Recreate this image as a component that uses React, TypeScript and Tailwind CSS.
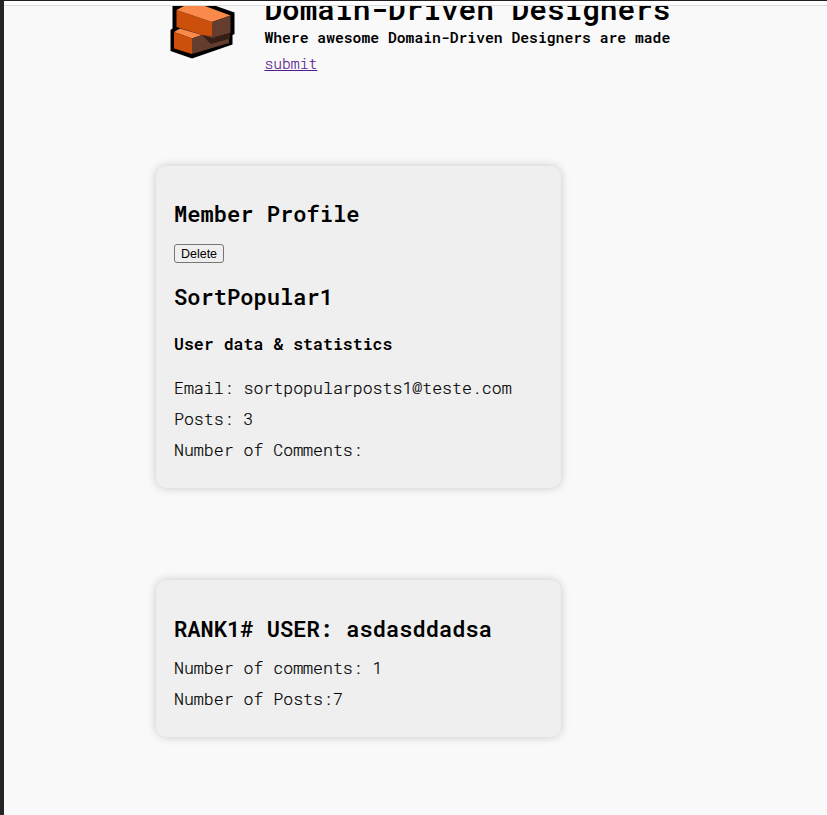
import type { ReactNode } from "react";

function Logo() {
  return (
    <svg className="ml-[166px] h-[54px] w-[66px] shrink-0" viewBox="0 0 66 54" aria-label="Bricks logo">
      <path d="M2.5 0H46L64.5 6.5V28L62.5 29V38.5L22 52.5L0.5 45V24L2.5 22.5Z" fill="#000" />
      <path d="M6.5 4L42 16V32L6.5 21Z" fill="#cc4f0b" />
      <path d="M6.5 4L14 0H35L60.5 9.5L42 16Z" fill="#fa8a4b" />
      <path d="M42 16L60.5 9.5V27L42 32Z" fill="#653d2e" />
      <path d="M4 26L10 22.5L32 29L22 32.5Z" fill="#fa8a4b" />
      <path d="M4 26L22 32.5V48L4 42.5Z" fill="#cc4f0b" />
      <path d="M22 32.5L32 29L59 32V37L22 48Z" fill="#653d2e" />
      <path d="M32 29L42 32L60 27V32.5L41 38Z" fill="#351f17" />
    </svg>
  );
}

function Card({ children, className }: { children: ReactNode; className: string }) {
  return (
    <section className={`ml-[152px] w-[405px] rounded-[10px] bg-[#efefef] pl-[18px] shadow-[0_0_10px_rgba(0,0,0,0.2)] ${className}`}>
      {children}
    </section>
  );
}

function Heading({ children }: { children: ReactNode }) {
  return <h2 className="text-[22.08px] leading-8 font-semibold whitespace-nowrap">{children}</h2>;
}

function Line({ children }: { children: ReactNode }) {
  return (
    <p className="text-[16.56px] leading-[31px] font-light whitespace-nowrap [-webkit-text-stroke:0.2px_#000]">
      {children}
    </p>
  );
}

export default function App() {
  return (
    <div className="h-[815px] w-[827px] overflow-hidden border-t border-l-4 border-t-[#231f20] border-l-[#262525] bg-[#f9f9f9] font-['Roboto_Mono','DejaVu_Sans_Mono',monospace] text-black">
      <div className="h-[5px] border-b border-[#dcdcdc] bg-white" />
      <header className="flex h-[80px] overflow-hidden">
        <Logo />
        <div className="-mt-[17px] ml-[28.4px] whitespace-nowrap">
          <h1 className="text-[29.43px] leading-10 font-semibold">Domain-Driven Designers</h1>
          <p className="-mt-[3px] text-[14.71px] leading-6 font-semibold">
            Where awesome Domain-Driven Designers are made
          </p>
          <a href="#" className="mt-[2px] block w-fit text-[14.71px] leading-6 font-light text-[#551a8b] underline [-webkit-text-stroke:0.15px_#551a8b]">
            submit
          </a>
        </div>
      </header>
      <main>
        <Card className="mt-[80px] h-[322px] pt-[32px]">
          <Heading>Member Profile</Heading>
          <button className="mt-[14px] block h-[19px] w-[50px] rounded-[3px] border border-[#767676] bg-[#efefef] pt-px text-center font-['Liberation_Sans',sans-serif] text-[12.5px] leading-4">
            Delete
          </button>
          <div className="mt-[18px]">
            <Heading>SortPopular1</Heading>
          </div>
          <h3 className="mt-[19px] mb-[16px] text-[16.56px] leading-6 font-semibold">User data &amp; statistics</h3>
          <Line>Email: sortpopularposts1@teste.com</Line>
          <Line>Posts: 3</Line>
          <Line>Number of Comments:</Line>
        </Card>
        <Card className="mt-[92px] h-[157px] pt-[33px]">
          <Heading>RANK1# USER: asdasddadsa</Heading>
          <div className="mt-[7px]">
            <Line>Number of comments: 1</Line>
            <Line>Number of Posts:7</Line>
          </div>
        </Card>
      </main>
    </div>
  );
}
